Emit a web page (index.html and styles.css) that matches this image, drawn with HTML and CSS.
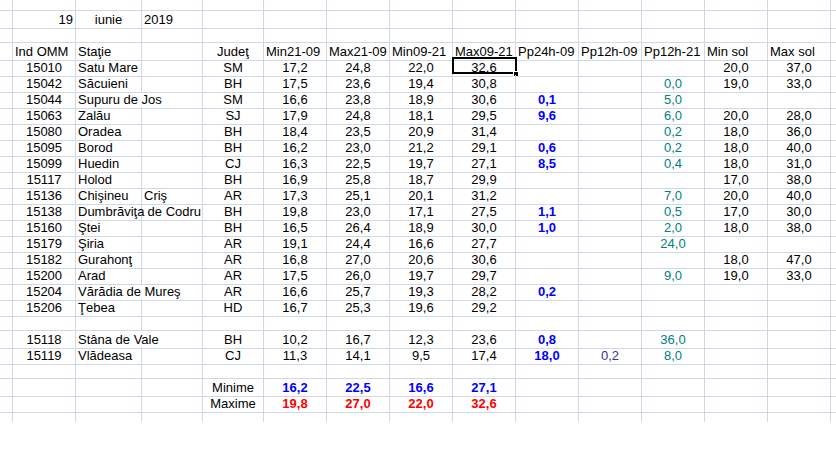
FILE: index.html
```html
<!DOCTYPE html>
<html lang="ro">
<head>
<meta charset="utf-8">
<title>19 iunie 2019</title>
<link rel="stylesheet" href="styles.css">
</head>
<body>
<div class="sheet">
  <div class="row top">
    <div class="c"></div><div class="c"></div><div class="c"></div><div class="c"></div><div class="c"></div><div class="c"></div><div class="c"></div><div class="c"></div><div class="c"></div><div class="c"></div><div class="c"></div><div class="c"></div><div class="c"></div><div class="c"></div><div class="c e"></div>
  </div>
  <div class="row">
    <div class="c"></div><div class="c rt">19</div><div class="c">iunie</div><div class="c l">2019</div><div class="c"></div><div class="c"></div><div class="c"></div><div class="c"></div><div class="c"></div><div class="c"></div><div class="c"></div><div class="c"></div><div class="c"></div><div class="c"></div><div class="c e"></div>
  </div>
  <div class="row">
    <div class="c"></div><div class="c"></div><div class="c"></div><div class="c"></div><div class="c"></div><div class="c"></div><div class="c"></div><div class="c"></div><div class="c"></div><div class="c"></div><div class="c"></div><div class="c"></div><div class="c"></div><div class="c"></div><div class="c e"></div>
  </div>
  <div class="row">
    <div class="c"></div><div class="c l">Ind OMM</div><div class="c l">Staţie</div><div class="c"></div><div class="c">Judeţ</div><div class="c l">Min21-09</div><div class="c l">Max21-09</div><div class="c l">Min09-21</div><div class="c l">Max09-21</div><div class="c l">Pp24h-09</div><div class="c l">Pp12h-09</div><div class="c l">Pp12h-21</div><div class="c l">Min sol</div><div class="c l">Max sol</div><div class="c e"></div>
  </div>
  <div class="row">
    <div class="c"></div><div class="c">15010</div><div class="c l">Satu Mare</div><div class="c"></div><div class="c">SM</div><div class="c">17,2</div><div class="c">24,8</div><div class="c">22,0</div><div class="c sel">32,6<span class="frame"></span><span class="handle"></span></div><div class="c b"></div><div class="c"></div><div class="c t"></div><div class="c">20,0</div><div class="c">37,0</div><div class="c e"></div>
  </div>
  <div class="row">
    <div class="c"></div><div class="c">15042</div><div class="c l">Săcuieni</div><div class="c"></div><div class="c">BH</div><div class="c">17,5</div><div class="c">23,6</div><div class="c">19,4</div><div class="c">30,8</div><div class="c b"></div><div class="c"></div><div class="c t">0,0</div><div class="c">19,0</div><div class="c">33,0</div><div class="c e"></div>
  </div>
  <div class="row">
    <div class="c"></div><div class="c">15044</div><div class="c l span2">Supuru de Jos</div><div class="c">SM</div><div class="c">16,6</div><div class="c">23,8</div><div class="c">18,9</div><div class="c">30,6</div><div class="c b">0,1</div><div class="c"></div><div class="c t">5,0</div><div class="c"></div><div class="c"></div><div class="c e"></div>
  </div>
  <div class="row">
    <div class="c"></div><div class="c">15063</div><div class="c l">Zalău</div><div class="c"></div><div class="c">SJ</div><div class="c">17,9</div><div class="c">24,8</div><div class="c">18,1</div><div class="c">29,5</div><div class="c b">9,6</div><div class="c"></div><div class="c t">6,0</div><div class="c">20,0</div><div class="c">28,0</div><div class="c e"></div>
  </div>
  <div class="row">
    <div class="c"></div><div class="c">15080</div><div class="c l">Oradea</div><div class="c"></div><div class="c">BH</div><div class="c">18,4</div><div class="c">23,5</div><div class="c">20,9</div><div class="c">31,4</div><div class="c b"></div><div class="c"></div><div class="c t">0,2</div><div class="c">18,0</div><div class="c">36,0</div><div class="c e"></div>
  </div>
  <div class="row">
    <div class="c"></div><div class="c">15095</div><div class="c l">Borod</div><div class="c"></div><div class="c">BH</div><div class="c">16,2</div><div class="c">23,0</div><div class="c">21,2</div><div class="c">29,1</div><div class="c b">0,6</div><div class="c"></div><div class="c t">0,2</div><div class="c">18,0</div><div class="c">40,0</div><div class="c e"></div>
  </div>
  <div class="row">
    <div class="c"></div><div class="c">15099</div><div class="c l">Huedin</div><div class="c"></div><div class="c">CJ</div><div class="c">16,3</div><div class="c">22,5</div><div class="c">19,7</div><div class="c">27,1</div><div class="c b">8,5</div><div class="c"></div><div class="c t">0,4</div><div class="c">18,0</div><div class="c">31,0</div><div class="c e"></div>
  </div>
  <div class="row">
    <div class="c"></div><div class="c">15117</div><div class="c l">Holod</div><div class="c"></div><div class="c">BH</div><div class="c">16,9</div><div class="c">25,8</div><div class="c">18,7</div><div class="c">29,9</div><div class="c b"></div><div class="c"></div><div class="c t"></div><div class="c">17,0</div><div class="c">38,0</div><div class="c e"></div>
  </div>
  <div class="row">
    <div class="c"></div><div class="c">15136</div><div class="c l">Chişineu</div><div class="c l">Criş</div><div class="c">AR</div><div class="c">17,3</div><div class="c">25,1</div><div class="c">20,1</div><div class="c">31,2</div><div class="c b"></div><div class="c"></div><div class="c t">7,0</div><div class="c">20,0</div><div class="c">40,0</div><div class="c e"></div>
  </div>
  <div class="row">
    <div class="c"></div><div class="c">15138</div><div class="c l">Dumbrăviţa</div><div class="c l">&nbsp;de Codru</div><div class="c">BH</div><div class="c">19,8</div><div class="c">23,0</div><div class="c">17,1</div><div class="c">27,5</div><div class="c b">1,1</div><div class="c"></div><div class="c t">0,5</div><div class="c">17,0</div><div class="c">30,0</div><div class="c e"></div>
  </div>
  <div class="row">
    <div class="c"></div><div class="c">15160</div><div class="c l">Ştei</div><div class="c"></div><div class="c">BH</div><div class="c">16,5</div><div class="c">26,4</div><div class="c">18,9</div><div class="c">30,0</div><div class="c b">1,0</div><div class="c"></div><div class="c t">2,0</div><div class="c">18,0</div><div class="c">38,0</div><div class="c e"></div>
  </div>
  <div class="row">
    <div class="c"></div><div class="c">15179</div><div class="c l">Şiria</div><div class="c"></div><div class="c">AR</div><div class="c">19,1</div><div class="c">24,4</div><div class="c">16,6</div><div class="c">27,7</div><div class="c b"></div><div class="c"></div><div class="c t">24,0</div><div class="c"></div><div class="c"></div><div class="c e"></div>
  </div>
  <div class="row">
    <div class="c"></div><div class="c">15182</div><div class="c l">Gurahonţ</div><div class="c"></div><div class="c">AR</div><div class="c">16,8</div><div class="c">27,0</div><div class="c">20,6</div><div class="c">30,6</div><div class="c b"></div><div class="c"></div><div class="c t"></div><div class="c">18,0</div><div class="c">47,0</div><div class="c e"></div>
  </div>
  <div class="row">
    <div class="c"></div><div class="c">15200</div><div class="c l">Arad</div><div class="c"></div><div class="c">AR</div><div class="c">17,5</div><div class="c">26,0</div><div class="c">19,7</div><div class="c">29,7</div><div class="c b"></div><div class="c"></div><div class="c t">9,0</div><div class="c">19,0</div><div class="c">33,0</div><div class="c e"></div>
  </div>
  <div class="row">
    <div class="c"></div><div class="c">15204</div><div class="c l span2">Vărădia de Mureş</div><div class="c">AR</div><div class="c">16,6</div><div class="c">25,7</div><div class="c">19,3</div><div class="c">28,2</div><div class="c b">0,2</div><div class="c"></div><div class="c t"></div><div class="c"></div><div class="c"></div><div class="c e"></div>
  </div>
  <div class="row">
    <div class="c"></div><div class="c">15206</div><div class="c l">Ţebea</div><div class="c"></div><div class="c">HD</div><div class="c">16,7</div><div class="c">25,3</div><div class="c">19,6</div><div class="c">29,2</div><div class="c b"></div><div class="c"></div><div class="c t"></div><div class="c"></div><div class="c"></div><div class="c e"></div>
  </div>
  <div class="row">
    <div class="c"></div><div class="c"></div><div class="c"></div><div class="c"></div><div class="c"></div><div class="c"></div><div class="c"></div><div class="c"></div><div class="c"></div><div class="c"></div><div class="c"></div><div class="c"></div><div class="c"></div><div class="c"></div><div class="c e"></div>
  </div>
  <div class="row">
    <div class="c"></div><div class="c">15118</div><div class="c l span2">Stâna de Vale</div><div class="c">BH</div><div class="c">10,2</div><div class="c">16,7</div><div class="c">12,3</div><div class="c">23,6</div><div class="c b">0,8</div><div class="c"></div><div class="c t">36,0</div><div class="c"></div><div class="c"></div><div class="c e"></div>
  </div>
  <div class="row">
    <div class="c"></div><div class="c">15119</div><div class="c l">Vlădeasa</div><div class="c"></div><div class="c">CJ</div><div class="c">11,3</div><div class="c">14,1</div><div class="c">9,5</div><div class="c">17,4</div><div class="c b">18,0</div><div class="c i">0,2</div><div class="c t">8,0</div><div class="c"></div><div class="c"></div><div class="c e"></div>
  </div>
  <div class="row">
    <div class="c"></div><div class="c"></div><div class="c"></div><div class="c"></div><div class="c"></div><div class="c"></div><div class="c"></div><div class="c"></div><div class="c"></div><div class="c"></div><div class="c"></div><div class="c"></div><div class="c"></div><div class="c"></div><div class="c e"></div>
  </div>
  <div class="row">
    <div class="c"></div><div class="c"></div><div class="c"></div><div class="c"></div><div class="c">Minime</div><div class="c b">16,2</div><div class="c b">22,5</div><div class="c b">16,6</div><div class="c b">27,1</div><div class="c"></div><div class="c"></div><div class="c"></div><div class="c"></div><div class="c"></div><div class="c e"></div>
  </div>
  <div class="row">
    <div class="c"></div><div class="c"></div><div class="c"></div><div class="c"></div><div class="c">Maxime</div><div class="c r">19,8</div><div class="c r">27,0</div><div class="c r">22,0</div><div class="c r">32,6</div><div class="c"></div><div class="c"></div><div class="c"></div><div class="c"></div><div class="c"></div><div class="c e"></div>
  </div>
  <div class="row last">
    <div class="c"></div><div class="c"></div><div class="c"></div><div class="c"></div><div class="c"></div><div class="c"></div><div class="c"></div><div class="c"></div><div class="c"></div><div class="c"></div><div class="c"></div><div class="c"></div><div class="c"></div><div class="c"></div><div class="c e"></div>
  </div>
</div>
</body>
</html>
```
FILE: styles.css
```css
html, body {
  margin: 0;
  padding: 0;
  background: #ffffff;
}

body {
  width: 836px;
  height: 460px;
  overflow: hidden;
  font-family: "Liberation Sans", Arial, sans-serif;
  font-size: 13px;
  color: #000000;
}

.sheet {
  display: flex;
  flex-direction: column;
}

.row {
  display: grid;
  grid-template-columns: 13px 63px 66px 61px 61px repeat(9, 63px) 5px;
  height: 16px;
}

.row.top {
  height: 11px;
}

.row.last {
  height: 11px;
}

.c {
  position: relative;
  box-sizing: border-box;
  border-right: 1px solid #d0d7e5;
  border-bottom: 1px solid #d0d7e5;
  text-align: center;
  white-space: nowrap;
  line-height: 17px;
  padding: 0 2px;
  overflow: visible;
}

.row.last .c {
  border-bottom: none;
}

.c.e {
  border-right: none;
}

.c.l {
  text-align: left;
}

.c.rt {
  text-align: right;
}

.span2 {
  grid-column: span 2;
}

.b {
  color: #0000ff;
  font-weight: bold;
}

.r {
  color: #ff0000;
  font-weight: bold;
}

.t {
  color: #008080;
}

.i {
  color: #333399;
}

.frame {
  position: absolute;
  left: -1px;
  top: -2px;
  width: 65px;
  height: 17px;
  box-sizing: border-box;
  border: 2px solid #000000;
}

.handle {
  position: absolute;
  left: 60px;
  top: 12px;
  width: 6px;
  height: 6px;
  box-sizing: border-box;
  background: #000000;
  border: 1px solid #ffffff;
  outline: none;
}
```
